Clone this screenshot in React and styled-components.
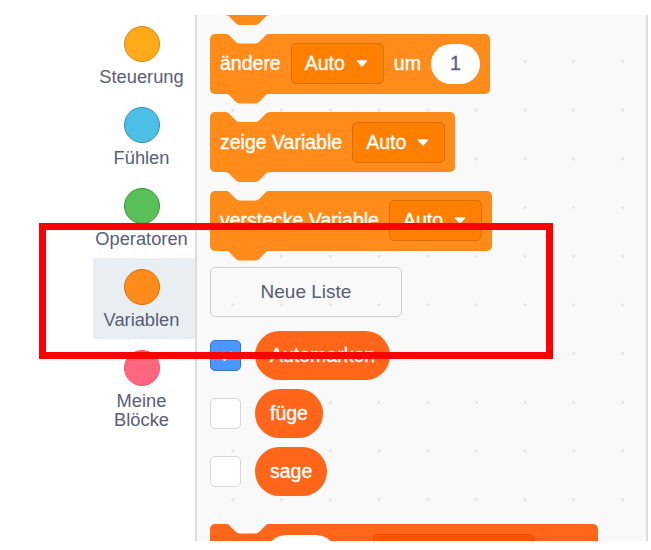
import React from "react";
import styled, { createGlobalStyle } from "styled-components";

const GlobalStyle = createGlobalStyle`
  html, body {
    margin: 0;
    padding: 0;
    background: #fff;
  }
  body {
    font-family: "Liberation Sans", Arial, sans-serif;
  }
`;

// scratch notch, scaled 1.25
const NOTCH = `path("M0 0 C2.5 0 3.75 1.25 5 2.5 L10 7.5 C11.25 8.75 12.5 10 15 10 H30 C32.5 10 33.75 8.75 35 7.5 L40 2.5 C41.25 1.25 42.5 0 45 0 Z")`;

const VARS = { fill: "#ff8c1a", field: "#ff8000", stroke: "#db6e00" };
const LISTS = { fill: "#ff661a", field: "#ff5500", stroke: "#e64d00" };

const Page = styled.div`
  position: relative;
  width: 651px;
  height: 550px;
  overflow: hidden;
  background: #fff;
`;

const Workspace = styled.div`
  display: flex;
  margin-top: 15px;
  height: 526px;
`;

const Gutter = styled.div`
  width: 93px;
  flex-shrink: 0;
`;

const CategoryMenu = styled.div`
  width: 102px;
  flex-shrink: 0;
  display: flex;
  flex-direction: column;
`;

const CategoryItem = styled.div`
  height: 81px;
  box-sizing: border-box;
  padding: 11px 5px 0 0;
  display: flex;
  flex-direction: column;
  align-items: center;
  background: ${(p) => (p.$active ? "#e9eef2" : "transparent")};
`;

const Bubble = styled.div`
  width: 36px;
  height: 36px;
  flex-shrink: 0;
  box-sizing: border-box;
  border-radius: 50%;
  background: ${(p) => p.$fill};
  border: 1px solid ${(p) => p.$stroke};
  margin-bottom: 5px;
`;

const CategoryLabel = styled.div`
  font-size: 18.3px;
  line-height: 19px;
  color: #575e75;
  text-align: center;
`;

const Divider = styled.div`
  width: 2px;
  flex-shrink: 0;
  background: #dcdcdc;
`;

const Flyout = styled.div`
  width: 451px;
  flex-shrink: 0;
  box-sizing: border-box;
  overflow: hidden;
  display: flex;
  flex-direction: column;
  align-items: flex-start;
  padding-left: 13px;
  background-color: #f9f9f9;
  background-image: radial-gradient(circle, #e2e2e2 1px, transparent 1.6px);
  background-size: 48.7px 48.7px;
  background-position: 11.6px 22.1px;
  border-right: 2px solid #dcdcdc;

  & > * {
    flex-shrink: 0;
  }
`;

const StackBlock = styled.div`
  position: relative;
  display: flex;
  align-items: center;
  gap: 10px;
  min-width: ${(p) => p.$w || 0}px;
  box-sizing: border-box;
  height: ${(p) => p.$h || 60}px;
  padding: 0 10px;
  margin-top: ${(p) => p.$mt ?? 18.5}px;
  border-radius: 5px;
  background: ${(p) => p.$tone.fill};

  &::before {
    content: "";
    position: absolute;
    left: 15px;
    top: 0;
    width: 45px;
    height: 10px;
    background: #f9f9f9;
    clip-path: ${NOTCH};
  }

  &::after {
    content: "";
    position: absolute;
    left: 15px;
    top: 100%;
    width: 45px;
    height: 10px;
    background: ${(p) => p.$tone.fill};
    clip-path: ${NOTCH};
  }
`;

const BlockText = styled.span`
  color: #fff;
  font-size: 19.5px;
  white-space: nowrap;
  -webkit-text-stroke: 0.35px #fff;
`;

// room taken by a label that is cut off below the flyout edge
const LabelGap = styled.span`
  width: ${(p) => p.$w}px;
  flex-shrink: 0;
`;

const Dropdown = styled.div`
  display: flex;
  align-items: center;
  gap: 11px;
  min-width: ${(p) => p.$w || 0}px;
  height: 41px;
  box-sizing: border-box;
  padding: 0 15px 0 13px;
  border-radius: 5px;
  background: ${(p) => p.$tone.field};
  border: 1px solid ${(p) => p.$tone.stroke};
`;

const NumberField = styled.div`
  width: ${(p) => p.$w || 49}px;
  height: 40px;
  flex-shrink: 0;
  border-radius: 20px;
  background: #fff;
  display: flex;
  align-items: center;
  justify-content: center;
  color: #575e75;
  font-size: 19.5px;
  -webkit-text-stroke: 0.3px #575e75;
`;

const FlyoutButton = styled.div`
  margin-top: 16.5px;
  width: 192px;
  height: 50px;
  box-sizing: border-box;
  border: 1px solid #cfcfcf;
  border-radius: 5px;
  display: flex;
  align-items: center;
  justify-content: center;
  font-size: 19px;
  color: #575e75;
`;

const ReporterRow = styled.div`
  display: flex;
  align-items: center;
  gap: 14px;
  margin-top: ${(p) => p.$mt}px;
`;

const Checkbox = styled.div`
  width: 31px;
  height: 31px;
  box-sizing: border-box;
  border-radius: 5px;
  border: 1px solid ${(p) => (p.$checked ? "#3373cc" : "#d6d6d6")};
  background: ${(p) => (p.$checked ? "#4c97ff" : "#fff")};
  display: flex;
  align-items: center;
  justify-content: center;
`;

const Reporter = styled.div`
  height: 49px;
  padding: 0 15px;
  border-radius: 25px;
  background: ${LISTS.fill};
  display: flex;
  align-items: center;
`;

const RedMark = styled.div`
  position: absolute;
  left: 39px;
  top: 223px;
  width: 514px;
  height: 136px;
  box-sizing: border-box;
  border: 7px solid #ff0000;
  pointer-events: none;
`;

const categories = [
  { label: "Steuerung", fill: "#ffab19", stroke: "#cf8b17" },
  { label: "Fühlen", fill: "#4cbfe6", stroke: "#2e8eb8" },
  { label: "Operatoren", fill: "#59c059", stroke: "#389438" },
  { label: "Variablen", fill: "#ff8c1a", stroke: "#db6e00", active: true },
  { label: ["Meine", "Blöcke"], fill: "#ff6680", stroke: "#ff4d6a" },
];

const Arrow = () => (
  <svg width="12" height="7" viewBox="0 0 12 7">
    <path d="M1.5 1 H10.5 L6 5.8 Z" fill="#fff" stroke="#fff" strokeWidth="1.6" strokeLinejoin="round" />
  </svg>
);

const Check = () => (
  <svg width="16" height="12" viewBox="0 0 16 12">
    <path d="M3 6.2 L6.6 9.6 L13 2.8" fill="none" stroke="#fff" strokeWidth="2.6" strokeLinecap="round" strokeLinejoin="round" />
  </svg>
);

const Field = ({ tone, children }) => (
  <Dropdown $tone={tone}>
    <BlockText>{children}</BlockText>
    <Arrow />
  </Dropdown>
);

const lists = [
  { name: "Automarken", checked: true, mt: 14 },
  { name: "füge", mt: 9 },
  { name: "sage", mt: 8.5 },
];

export default function App() {
  return (
    <Page>
      <GlobalStyle />
      <Workspace>
        <Gutter />
        <CategoryMenu>
          {categories.map((c, i) => (
            <CategoryItem key={i} $active={c.active}>
              <Bubble $fill={c.fill} $stroke={c.stroke} />
              {[].concat(c.label).map((line) => (
                <CategoryLabel key={line}>{line}</CategoryLabel>
              ))}
            </CategoryItem>
          ))}
        </CategoryMenu>
        <Divider />
        <Flyout>
          {/* block scrolled above the top edge, only its tab shows */}
          <StackBlock $tone={VARS} $mt={-60} $w={260} />
          <StackBlock $tone={VARS}>
            <BlockText>ändere</BlockText>
            <Field tone={VARS}>Auto</Field>
            <BlockText>um</BlockText>
            <NumberField>1</NumberField>
          </StackBlock>
          <StackBlock $tone={VARS}>
            <BlockText>zeige Variable</BlockText>
            <Field tone={VARS}>Auto</Field>
          </StackBlock>
          <StackBlock $tone={VARS}>
            <BlockText>verstecke Variable</BlockText>
            <Field tone={VARS}>Auto</Field>
          </StackBlock>

          <FlyoutButton>Neue Liste</FlyoutButton>

          {lists.map((l) => (
            <ReporterRow key={l.name} $mt={l.mt}>
              <Checkbox $checked={l.checked}>{l.checked && <Check />}</Checkbox>
              <Reporter>
                <BlockText>{l.name}</BlockText>
              </Reporter>
            </ReporterRow>
          ))}

          {/* next block, cut by the bottom edge */}
          <StackBlock $tone={LISTS} $mt={28} $h={62} $w={388}>
            <LabelGap $w={36} />
            <NumberField $w={70} />
            <LabelGap $w={17} />
            <Dropdown $tone={LISTS} $w={161} />
          </StackBlock>
        </Flyout>
      </Workspace>
      <RedMark />
    </Page>
  );
}
